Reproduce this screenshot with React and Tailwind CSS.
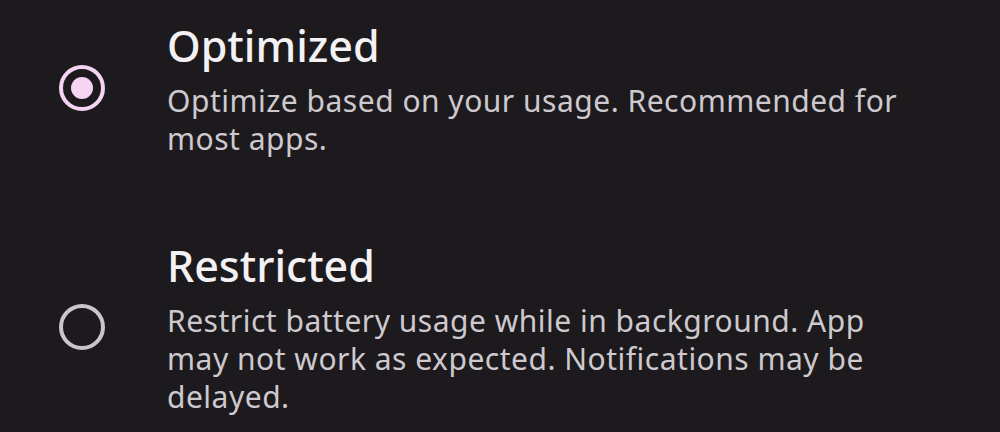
import React from 'react';

const options = [
  {
    title: 'Optimized',
    desc: 'Optimize based on your usage. Recommended for most apps.',
    selected: true,
  },
  {
    title: 'Restricted',
    desc: 'Restrict battery usage while in background. App may not work as expected. Notifications may be delayed.',
    selected: false,
  },
];

function Radio({ selected }) {
  if (selected) {
    return (
      <div className="w-[46px] h-[46px] rounded-full border-[4px] border-[#f5d3f3] flex items-center justify-center">
        <div className="w-[22px] h-[22px] rounded-full bg-[#f5d3f3]" />
      </div>
    );
  }
  return <div className="w-[46px] h-[46px] rounded-full border-[4px] border-[#c9c5ca]" />;
}

export default function App() {
  return (
    <div
      className="w-[1000px] h-[432px] bg-[#1c1a1d] overflow-hidden flex flex-col gap-[84px] pt-[22px]"
      style={{ fontFamily: '"Noto Sans", sans-serif' }}
    >
      {options.map((o) => (
        <div key={o.title} className="flex items-center">
          <div className="w-[167px] flex justify-center pr-[4px] pb-[5px]">
            <Radio selected={o.selected} />
          </div>
          <div className="w-[745px]">
            <div className="text-[43px] leading-[48px] font-medium text-[#f3f1f3]">{o.title}</div>
            <div className="mt-[12px] text-[30px] leading-[38px] tracking-[0.5px] text-[#cdc9ce]">{o.desc}</div>
          </div>
        </div>
      ))}
    </div>
  );
}
